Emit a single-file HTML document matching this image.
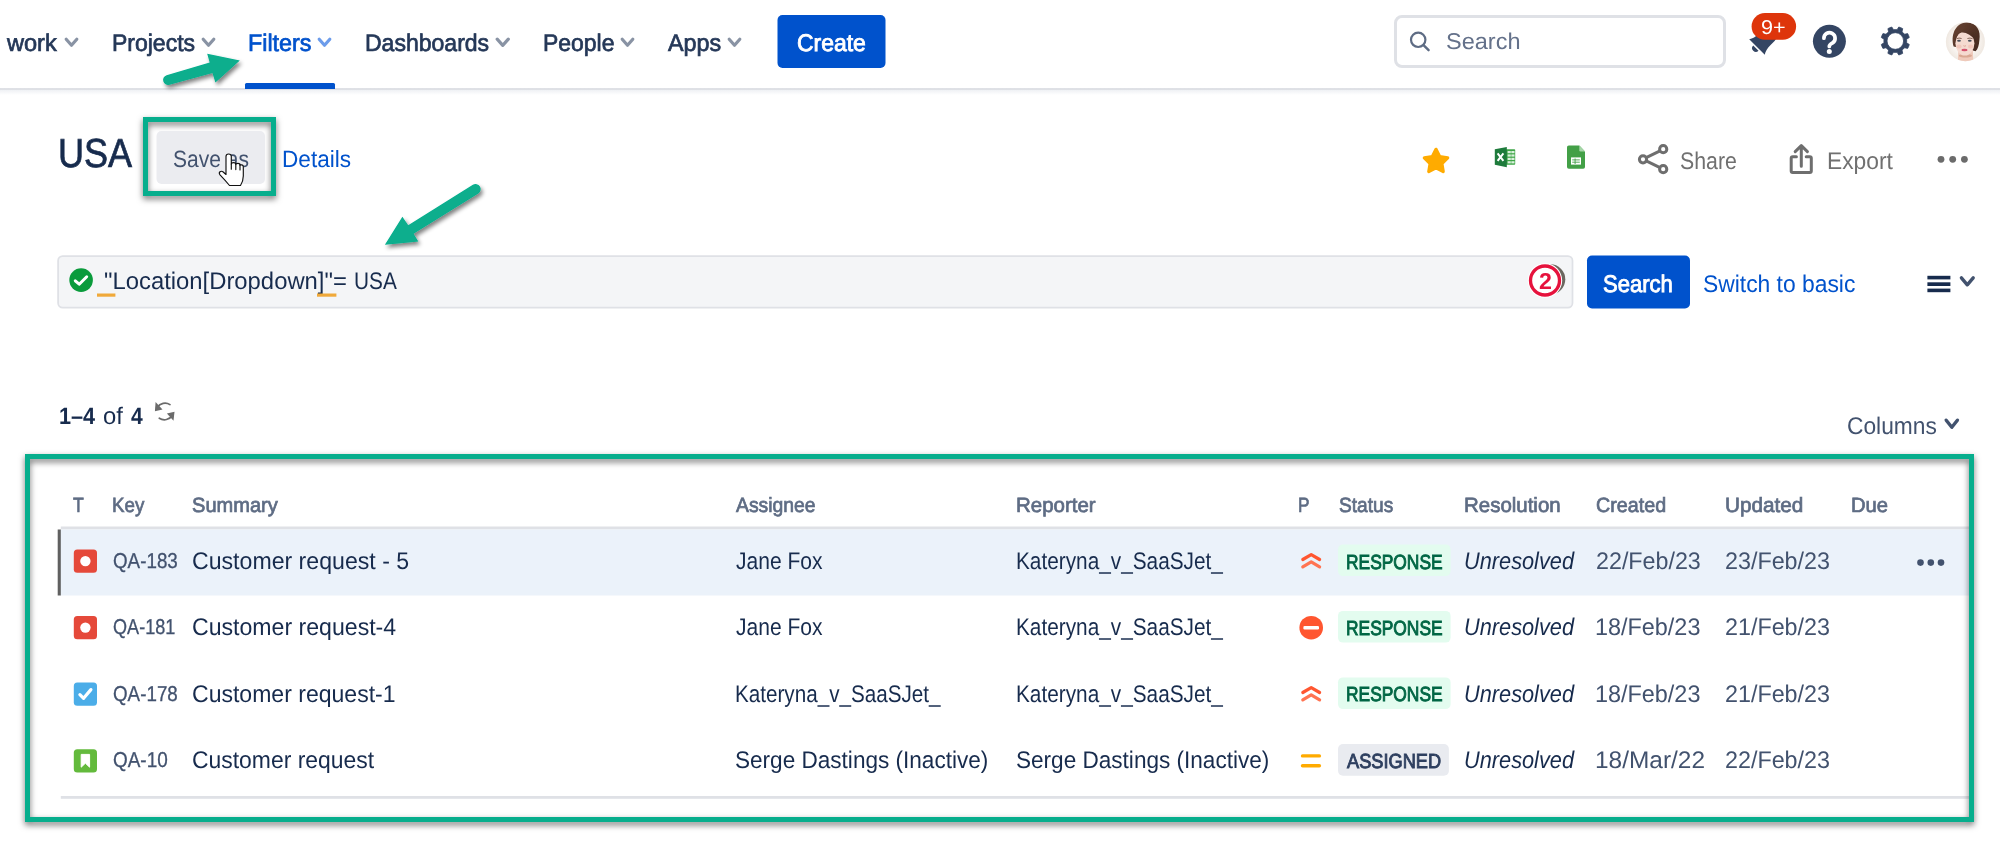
<!DOCTYPE html>
<html><head><meta charset="utf-8"><title>USA - Jira</title>
<style>
html,body{margin:0;padding:0;background:#fff;}
body{width:2000px;height:848px;position:relative;overflow:hidden;font-family:"Liberation Sans",sans-serif;text-rendering:geometricPrecision;}
.t{position:absolute;white-space:nowrap;margin:0;padding:0;transform-origin:0 0;}
.r{position:absolute;box-sizing:border-box;}
svg{position:absolute;overflow:visible;}
</style></head><body>
<div class="r" style="left:0;top:87px;width:2000px;height:8px;background:linear-gradient(to bottom,#ffffff 0%,#ffffff 8%,#DFE1E6 16%,#DEE0E5 36%,#F0F2F5 42%,#F6F7F9 65%,#ffffff 100%);"></div>
<div class="t" style="left:6.90px;top:32px;font-size:24px;line-height:24px;color:#253858;transform:scaleX(0.9811);-webkit-text-stroke:0.7px #253858;">work</div>
<svg style="left:0;top:0" width="2000" height="848"><polyline points="66.2,39.2 71.5,45.3 76.8,39.2" fill="none" stroke="#8993A4" stroke-width="3.2" stroke-linecap="round" stroke-linejoin="round"/></svg>
<div class="t" style="left:111.67px;top:32px;font-size:24px;line-height:24px;color:#253858;transform:scaleX(0.9576);-webkit-text-stroke:0.7px #253858;">Projects</div>
<svg style="left:0;top:0" width="2000" height="848"><polyline points="203.2,39.2 208.5,45.3 213.8,39.2" fill="none" stroke="#8993A4" stroke-width="3.2" stroke-linecap="round" stroke-linejoin="round"/></svg>
<div class="t" style="left:248.04px;top:32px;font-size:24px;line-height:24px;color:#0052CC;transform:scaleX(0.9713);-webkit-text-stroke:0.7px #0052CC;">Filters</div>
<svg style="left:0;top:0" width="2000" height="848"><polyline points="319.2,39.2 324.5,45.3 329.8,39.2" fill="none" stroke="#6C9CEB" stroke-width="3.2" stroke-linecap="round" stroke-linejoin="round"/></svg>
<div class="r" style="left:244.5px;top:83px;width:90.00px;height:5.50px;background:#0052CC;border-radius:0px;border-radius:1.5px 1.5px 0 0;"></div>
<div class="t" style="left:365.36px;top:32px;font-size:24px;line-height:24px;color:#253858;transform:scaleX(0.9591);-webkit-text-stroke:0.7px #253858;">Dashboards</div>
<svg style="left:0;top:0" width="2000" height="848"><polyline points="497.2,39.2 502.75,45.3 508.3,39.2" fill="none" stroke="#8993A4" stroke-width="3.2" stroke-linecap="round" stroke-linejoin="round"/></svg>
<div class="t" style="left:543.37px;top:32px;font-size:24px;line-height:24px;color:#253858;transform:scaleX(0.9552);-webkit-text-stroke:0.7px #253858;">People</div>
<svg style="left:0;top:0" width="2000" height="848"><polyline points="622.2,39.2 627.5,45.3 632.8,39.2" fill="none" stroke="#8993A4" stroke-width="3.2" stroke-linecap="round" stroke-linejoin="round"/></svg>
<div class="t" style="left:668.00px;top:32px;font-size:24px;line-height:24px;color:#253858;transform:scaleX(0.9705);-webkit-text-stroke:0.7px #253858;">Apps</div>
<svg style="left:0;top:0" width="2000" height="848"><polyline points="729.2,39.2 734.5,45.3 739.8,39.2" fill="none" stroke="#8993A4" stroke-width="3.2" stroke-linecap="round" stroke-linejoin="round"/></svg>
<svg style="left:0;top:0" width="2000" height="848"><rect x="777.5" y="15" width="108.00" height="53.00" rx="5" fill="#0052CC"/></svg>
<div class="t" style="left:797.18px;top:32px;font-size:24px;line-height:24px;color:#fff;transform:scaleX(0.9553);-webkit-text-stroke:0.85px #fff;">Create</div>
<div class="r" style="left:1393.5px;top:15px;width:332.50px;height:53.00px;background:#fff;border-radius:8px;border:3px solid #DFE1E6;"></div>
<svg style="left:0;top:0" width="2000" height="848"><circle cx="1418.2" cy="39.8" r="7.2" fill="none" stroke="#5E6C84" stroke-width="2.2"/><line x1="1423.5" y1="45.1" x2="1428.6" y2="50.2" stroke="#5E6C84" stroke-width="2.4" stroke-linecap="round"/></svg>
<div class="t" style="left:1446.04px;top:30px;font-size:22.75px;line-height:22.75px;color:#64718A;transform:scaleX(1.0332);">Search</div>
<div class="t" style="left:57.77px;top:133px;font-size:40.5px;line-height:40.5px;color:#172B4D;transform:scaleX(0.8905);-webkit-text-stroke:0.7px #172B4D;">USA</div>
<div class="r" style="left:143px;top:117px;width:133px;height:79px;border:5px solid #07AE8D;filter:drop-shadow(0.7px 3px 3.4px rgba(0,0,0,.55));"></div>
<svg style="left:0;top:0" width="2000" height="848"><rect x="156.5" y="131" width="108.50" height="53.00" rx="5" fill="#EBECF0"/></svg>
<div class="t" style="left:173.05px;top:148px;font-size:23.5px;line-height:23.5px;color:#42526E;transform:scaleX(0.8940);">Save as</div>
<div class="t" style="left:282.35px;top:148px;font-size:23.5px;line-height:23.5px;color:#0052CC;transform:scaleX(0.9614);">Details</div>
<div class="t" style="left:1680.44px;top:150px;font-size:24px;line-height:24px;color:#707070;transform:scaleX(0.8870);">Share</div>
<div class="t" style="left:1827.03px;top:150px;font-size:24px;line-height:24px;color:#707070;transform:scaleX(0.9506);">Export</div>
<svg style="left:0;top:0" width="2000" height="848"><circle cx="1941" cy="159.3" r="3.4" fill="#6B6B6B"/><circle cx="1952.7" cy="159.3" r="3.4" fill="#6B6B6B"/><circle cx="1964.4" cy="159.3" r="3.4" fill="#6B6B6B"/></svg>
<svg style="left:0;top:0" width="2000" height="848"><rect x="58.1" y="256.1" width="1514.4" height="51.6" rx="4.6" fill="#F4F5F7" stroke="#DFE1E6" stroke-width="1.75"/></svg>
<div class="t" style="left:103.50px;top:270px;font-size:24px;line-height:24px;color:#172B4D;transform:scaleX(0.9932);">&quot;Location[Dropdown]&quot;=</div>
<div class="t" style="left:353.70px;top:270px;font-size:24px;line-height:24px;color:#172B4D;transform:scaleX(0.8662);">USA</div>
<svg style="left:0;top:0" width="2000" height="848"><rect x="97" y="293.5" width="18.40" height="3.20" rx="0" fill="#F0A93A"/></svg>
<svg style="left:0;top:0" width="2000" height="848"><rect x="317" y="293.5" width="19.40" height="3.20" rx="0" fill="#F0A93A"/></svg>
<svg style="left:0;top:0" width="2000" height="848"><rect x="1587" y="255.5" width="103.00" height="53.00" rx="5" fill="#0052CC"/></svg>
<div class="t" style="left:1603.43px;top:273px;font-size:24px;line-height:24px;color:#fff;transform:scaleX(0.9187);-webkit-text-stroke:0.85px #fff;">Search</div>
<div class="t" style="left:1703.47px;top:273px;font-size:24px;line-height:24px;color:#0052CC;transform:scaleX(0.9517);">Switch to basic</div>
<svg style="left:0;top:0" width="2000" height="848"><rect x="1927.4" y="275.8" width="23.00" height="3.60" rx="0" fill="#172B4D"/></svg>
<svg style="left:0;top:0" width="2000" height="848"><rect x="1927.4" y="282.3" width="23.00" height="3.70" rx="0" fill="#172B4D"/></svg>
<svg style="left:0;top:0" width="2000" height="848"><rect x="1927.4" y="288.6" width="23.00" height="3.60" rx="0" fill="#172B4D"/></svg>
<svg style="left:0;top:0" width="2000" height="848"><polyline points="1961.4,277.8 1967.3000000000002,284.8 1973.2,277.8" fill="none" stroke="#42526E" stroke-width="3.4" stroke-linecap="round" stroke-linejoin="round"/></svg>
<div class="t" style="left:59.16px;top:406px;font-size:23.6px;line-height:23.6px;color:#172B4D;transform:scaleX(0.9184);font-weight:bold;">1–4</div>
<div class="t" style="left:103.30px;top:405px;font-size:24px;line-height:24px;color:#172B4D;transform:scaleX(0.9918);">of</div>
<div class="t" style="left:130.78px;top:406px;font-size:23.6px;line-height:23.6px;color:#172B4D;transform:scaleX(0.8933);font-weight:bold;">4</div>
<div class="t" style="left:1846.76px;top:415px;font-size:24px;line-height:24px;color:#42526E;transform:scaleX(0.9478);">Columns</div>
<svg style="left:0;top:0" width="2000" height="848"><polyline points="1946.2,420.2 1951.8,427.3 1957.3999999999999,420.2" fill="none" stroke="#42526E" stroke-width="3.4" stroke-linecap="round" stroke-linejoin="round"/></svg>
<div class="t" style="left:73.06px;top:496px;font-size:20.6px;line-height:20.6px;color:#5E6C84;transform:scaleX(0.8577);-webkit-text-stroke:0.7px #5E6C84;">T</div>
<div class="t" style="left:112.21px;top:496px;font-size:20.6px;line-height:20.6px;color:#5E6C84;transform:scaleX(0.9093);-webkit-text-stroke:0.7px #5E6C84;">Key</div>
<div class="t" style="left:192.35px;top:496px;font-size:20.6px;line-height:20.6px;color:#5E6C84;transform:scaleX(0.9741);-webkit-text-stroke:0.7px #5E6C84;">Summary</div>
<div class="t" style="left:736.21px;top:496px;font-size:20.6px;line-height:20.6px;color:#5E6C84;transform:scaleX(0.9391);-webkit-text-stroke:0.7px #5E6C84;">Assignee</div>
<div class="t" style="left:1016.07px;top:496px;font-size:20.6px;line-height:20.6px;color:#5E6C84;transform:scaleX(0.9944);-webkit-text-stroke:0.7px #5E6C84;">Reporter</div>
<div class="t" style="left:1297.83px;top:496px;font-size:20.6px;line-height:20.6px;color:#5E6C84;transform:scaleX(0.8379);-webkit-text-stroke:0.7px #5E6C84;">P</div>
<div class="t" style="left:1338.89px;top:496px;font-size:20.6px;line-height:20.6px;color:#5E6C84;transform:scaleX(0.9289);-webkit-text-stroke:0.7px #5E6C84;">Status</div>
<div class="t" style="left:1464.07px;top:496px;font-size:20.6px;line-height:20.6px;color:#5E6C84;transform:scaleX(0.9933);-webkit-text-stroke:0.7px #5E6C84;">Resolution</div>
<div class="t" style="left:1596.06px;top:496px;font-size:20.6px;line-height:20.6px;color:#5E6C84;transform:scaleX(0.9573);-webkit-text-stroke:0.7px #5E6C84;">Created</div>
<div class="t" style="left:1725.35px;top:496px;font-size:20.6px;line-height:20.6px;color:#5E6C84;transform:scaleX(1.0069);-webkit-text-stroke:0.7px #5E6C84;">Updated</div>
<div class="t" style="left:1851.29px;top:496px;font-size:20.6px;line-height:20.6px;color:#5E6C84;transform:scaleX(0.9805);-webkit-text-stroke:0.7px #5E6C84;">Due</div>
<svg style="left:0;top:0" width="2000" height="848"><rect x="60.8" y="526.5" width="1908.20" height="3.00" rx="0" fill="#DFE1E6"/></svg>
<svg style="left:0;top:0" width="2000" height="848"><rect x="60" y="529.5" width="1909.00" height="66.00" rx="0" fill="#EBF2FA"/></svg>
<svg style="left:0;top:0" width="2000" height="848"><rect x="57.7" y="529.5" width="3.10" height="66.00" rx="0" fill="#606060"/></svg>
<svg style="left:0;top:0" width="2000" height="848"><rect x="60.8" y="796" width="1908.20" height="2.80" rx="0" fill="#DFE1E6"/></svg>
<svg style="left:0;top:0" width="2000" height="848"><rect x="73.8" y="549.5" width="23.20" height="23.20" rx="3.5" fill="#E5493A"/></svg>
<svg style="left:0;top:0" width="2000" height="848"><circle cx="85.39999999999999" cy="561.1" r="5.2" fill="#fff"/></svg>
<div class="t" style="left:113.17px;top:551px;font-size:21.5px;line-height:21.5px;color:#42526E;transform:scaleX(0.8745);-webkit-text-stroke:0.3px #42526E;">QA-183</div>
<div class="t" style="left:192.34px;top:550px;font-size:24px;line-height:24px;color:#172B4D;transform:scaleX(0.9632);">Customer request - 5</div>
<div class="t" style="left:735.58px;top:550px;font-size:24px;line-height:24px;color:#172B4D;transform:scaleX(0.8755);">Jane Fox</div>
<div class="t" style="left:1015.70px;top:550px;font-size:24px;line-height:24px;color:#172B4D;transform:scaleX(0.8661);">Kateryna_v_SaaSJet_</div>
<svg style="left:0;top:0" width="2000" height="848"><g fill="none" stroke-width="3.2" stroke-linecap="round" stroke-linejoin="round"><polyline stroke="#FF5630" points="1302.8,559.5 1311.2,554.6 1319.6000000000001,559.5"/><polyline stroke="#FF7452" points="1302.8,566.9 1311.2,561.8000000000001 1319.6000000000001,566.9"/></g></svg>
<svg style="left:0;top:0" width="2000" height="848"><rect x="1338" y="544.4" width="112.60" height="31.70" rx="5" fill="#E3FCEF"/></svg>
<div class="t" style="left:1345.92px;top:553px;font-size:20.4px;line-height:20.4px;color:#006644;transform:scaleX(0.8526);-webkit-text-stroke:0.9px #006644;">RESPONSE</div>
<div class="t" style="left:1463.79px;top:550px;font-size:24px;line-height:24px;color:#172B4D;transform:scaleX(0.9063);font-style:italic;">Unresolved</div>
<div class="t" style="left:1595.74px;top:550px;font-size:24px;line-height:24px;color:#42526E;transform:scaleX(0.9694);">22/Feb/23</div>
<div class="t" style="left:1725.43px;top:550px;font-size:24px;line-height:24px;color:#42526E;transform:scaleX(0.9713);">23/Feb/23</div>
<svg style="left:0;top:0" width="2000" height="848"><rect x="73.8" y="616.0" width="23.20" height="23.20" rx="3.5" fill="#E5493A"/></svg>
<svg style="left:0;top:0" width="2000" height="848"><circle cx="85.39999999999999" cy="627.6" r="5.2" fill="#fff"/></svg>
<div class="t" style="left:113.20px;top:617px;font-size:21.5px;line-height:21.5px;color:#42526E;transform:scaleX(0.8411);-webkit-text-stroke:0.3px #42526E;">QA-181</div>
<div class="t" style="left:192.35px;top:616px;font-size:24px;line-height:24px;color:#172B4D;transform:scaleX(0.9625);">Customer request-4</div>
<div class="t" style="left:735.58px;top:616px;font-size:24px;line-height:24px;color:#172B4D;transform:scaleX(0.8755);">Jane Fox</div>
<div class="t" style="left:1015.70px;top:616px;font-size:24px;line-height:24px;color:#172B4D;transform:scaleX(0.8661);">Kateryna_v_SaaSJet_</div>
<svg style="left:0;top:0" width="2000" height="848"><circle cx="1311.2" cy="627.7" r="11.8" fill="#FF5630"/><rect x="1303.4" y="625.9" width="15.6" height="3.6" rx="1.2" fill="#fff"/></svg>
<svg style="left:0;top:0" width="2000" height="848"><rect x="1338" y="610.9" width="112.60" height="31.70" rx="5" fill="#E3FCEF"/></svg>
<div class="t" style="left:1345.92px;top:619px;font-size:20.4px;line-height:20.4px;color:#006644;transform:scaleX(0.8526);-webkit-text-stroke:0.9px #006644;">RESPONSE</div>
<div class="t" style="left:1463.79px;top:616px;font-size:24px;line-height:24px;color:#172B4D;transform:scaleX(0.9063);font-style:italic;">Unresolved</div>
<div class="t" style="left:1595.12px;top:616px;font-size:24px;line-height:24px;color:#42526E;transform:scaleX(0.9751);">18/Feb/23</div>
<div class="t" style="left:1725.43px;top:616px;font-size:24px;line-height:24px;color:#42526E;transform:scaleX(0.9713);">21/Feb/23</div>
<svg style="left:0;top:0" width="2000" height="848"><rect x="73.8" y="682.5" width="23.20" height="23.20" rx="3.5" fill="#4BADE8"/></svg>
<svg style="left:0;top:0" width="2000" height="848"><polyline points="79.89999999999999,694.6 83.6,698.3000000000001 90.89999999999999,689.6" fill="none" stroke="#fff" stroke-width="3.2" stroke-linecap="round" stroke-linejoin="round"/></svg>
<div class="t" style="left:113.17px;top:684px;font-size:21.5px;line-height:21.5px;color:#42526E;transform:scaleX(0.8745);-webkit-text-stroke:0.3px #42526E;">QA-178</div>
<div class="t" style="left:192.35px;top:683px;font-size:24px;line-height:24px;color:#172B4D;transform:scaleX(0.9598);">Customer request-1</div>
<div class="t" style="left:735.01px;top:683px;font-size:24px;line-height:24px;color:#172B4D;transform:scaleX(0.8607);">Kateryna_v_SaaSJet_</div>
<div class="t" style="left:1015.70px;top:683px;font-size:24px;line-height:24px;color:#172B4D;transform:scaleX(0.8661);">Kateryna_v_SaaSJet_</div>
<svg style="left:0;top:0" width="2000" height="848"><g fill="none" stroke-width="3.2" stroke-linecap="round" stroke-linejoin="round"><polyline stroke="#FF5630" points="1302.8,692.5 1311.2,687.6 1319.6000000000001,692.5"/><polyline stroke="#FF7452" points="1302.8,699.9 1311.2,694.8000000000001 1319.6000000000001,699.9"/></g></svg>
<svg style="left:0;top:0" width="2000" height="848"><rect x="1338" y="677.4" width="112.60" height="31.70" rx="5" fill="#E3FCEF"/></svg>
<div class="t" style="left:1345.92px;top:685px;font-size:20.4px;line-height:20.4px;color:#006644;transform:scaleX(0.8526);-webkit-text-stroke:0.9px #006644;">RESPONSE</div>
<div class="t" style="left:1463.79px;top:683px;font-size:24px;line-height:24px;color:#172B4D;transform:scaleX(0.9063);font-style:italic;">Unresolved</div>
<div class="t" style="left:1595.12px;top:683px;font-size:24px;line-height:24px;color:#42526E;transform:scaleX(0.9751);">18/Feb/23</div>
<div class="t" style="left:1725.43px;top:683px;font-size:24px;line-height:24px;color:#42526E;transform:scaleX(0.9713);">21/Feb/23</div>
<svg style="left:0;top:0" width="2000" height="848"><rect x="73.8" y="749.1999999999999" width="23.20" height="23.20" rx="3.5" fill="#63BA3C"/></svg>
<svg style="left:0;top:0" width="2000" height="848"><path d="M81.19999999999999,754.4 h8.4 v12.8 l-4.2,-4 l-4.2,4 z" fill="#fff" stroke="#fff" stroke-width="1" stroke-linejoin="round"/></svg>
<div class="t" style="left:113.16px;top:750px;font-size:21.5px;line-height:21.5px;color:#42526E;transform:scaleX(0.8805);-webkit-text-stroke:0.3px #42526E;">QA-10</div>
<div class="t" style="left:192.35px;top:749px;font-size:24px;line-height:24px;color:#172B4D;transform:scaleX(0.9547);">Customer request</div>
<div class="t" style="left:734.88px;top:749px;font-size:24px;line-height:24px;color:#172B4D;transform:scaleX(0.9401);">Serge Dastings (Inactive)</div>
<div class="t" style="left:1016.38px;top:749px;font-size:24px;line-height:24px;color:#172B4D;transform:scaleX(0.9401);">Serge Dastings (Inactive)</div>
<svg style="left:0;top:0" width="2000" height="848"><g stroke="#FFAB00" stroke-width="3.4" stroke-linecap="round"><line x1="1302.5" y1="755.9" x2="1319.4" y2="755.9"/><line x1="1302.5" y1="765.8" x2="1319.4" y2="765.8"/></g></svg>
<svg style="left:0;top:0" width="2000" height="848"><rect x="1338" y="744.0999999999999" width="110.90" height="31.70" rx="5" fill="#E9EBF0"/></svg>
<div class="t" style="left:1346.91px;top:752px;font-size:20.4px;line-height:20.4px;color:#2E3F5F;transform:scaleX(0.8925);-webkit-text-stroke:0.9px #2E3F5F;">ASSIGNED</div>
<div class="t" style="left:1463.79px;top:749px;font-size:24px;line-height:24px;color:#172B4D;transform:scaleX(0.9063);font-style:italic;">Unresolved</div>
<div class="t" style="left:1595.04px;top:749px;font-size:24px;line-height:24px;color:#42526E;transform:scaleX(1.0179);">18/Mar/22</div>
<div class="t" style="left:1725.43px;top:749px;font-size:24px;line-height:24px;color:#42526E;transform:scaleX(0.9713);">22/Feb/23</div>
<svg style="left:0;top:0" width="2000" height="848"><circle cx="1920.5" cy="562.6" r="3.3" fill="#42526E"/><circle cx="1930.8" cy="562.6" r="3.3" fill="#42526E"/><circle cx="1941" cy="562.6" r="3.3" fill="#42526E"/></svg>
<div class="r" style="left:25px;top:454px;width:1949px;height:368px;border:5px solid #07AE8D;filter:drop-shadow(0.7px 3px 3.4px rgba(0,0,0,.55));"></div>
<svg style="left:0;top:0" width="2000" height="848"><defs><filter id="ash" x="-20%" y="-20%" width="150%" height="150%"><feGaussianBlur in="SourceAlpha" stdDeviation="1.9"/><feOffset dx="2" dy="2.6"/><feComponentTransfer><feFuncA type="linear" slope="0.5"/></feComponentTransfer><feMerge><feMergeNode/><feMergeNode in="SourceGraphic"/></feMerge></filter></defs><g filter="url(#ash)" fill="#07AE8D" stroke="none"><path d="M166.64,75.19 L209.7,62.6 L207.2,53.8 L239.8,60.5 L215.4,82.5 L212.5,72.9 L169.4,84.8 A5,5 0 0 1 166.64,75.19 Z"/><path d="M472.9,184.8 L408.2,225.2 L402.4,216.7 L384.9,244.8 L418.3,241.6 L413.5,233.7 L478.3,193.4 A5.05,5.05 0 0 0 472.9,184.8 Z"/></g></svg>
<svg style="left:0;top:0" width="2000" height="848"><g stroke="#111" stroke-width="1.15" stroke-linejoin="round" stroke-linecap="round"><path fill="#fff" d="M226,156.5 Q226,154 228.6,154 Q231.3,154 231.3,156.5 L231.3,164 Q231.3,162.6 233.5,162.6 Q235.8,162.6 235.8,164.5 Q235.8,163.4 237.9,163.4 Q240,163.4 240,165.3 Q240,164.8 241.7,164.8 Q243.3,164.8 243.3,167 L243.3,176 Q243.3,181 240.5,185.5 L229.5,185.5 Q226,181 220,174.8 Q218.6,173 220,171.8 Q221.5,170.6 223.2,172 L226,174.5 Z"/><path fill="none" d="M231.3,164 V169.2 M235.8,164.5 V169.6 M240,165.3 V170"/></g></svg>
<svg style="left:0;top:0" width="2000" height="848"><polygon points="1436.00,149.30 1439.64,156.58 1447.70,157.80 1441.90,163.52 1443.23,171.55 1436.00,167.80 1428.77,171.55 1430.10,163.52 1424.30,157.80 1432.36,156.58" fill="#FFAB00" stroke="#FFAB00" stroke-width="3.2" stroke-linejoin="round"/></svg>
<svg style="left:0;top:0" width="2000" height="848"><rect x="1505" y="149.2" width="10.2" height="15.5" rx="0.8" fill="#3FA648"/><g fill="#d9f0dc"><rect x="1507.6" y="151" width="3.2" height="2.2"/><rect x="1507.6" y="154.4" width="3.2" height="2.2"/><rect x="1507.6" y="157.8" width="3.2" height="2.2"/><rect x="1507.6" y="161.2" width="3.2" height="2.2"/><rect x="1511.3" y="151" width="3.2" height="2.2"/><rect x="1511.3" y="154.4" width="3.2" height="2.2"/><rect x="1511.3" y="157.8" width="3.2" height="2.2"/><rect x="1511.3" y="161.2" width="3.2" height="2.2"/></g><polygon points="1494.8,149.3 1506.8,147 1506.8,167.2 1494.8,164.8" fill="#1E7B3C"/><path d="M1497.6,153.4 L1503.4,160.9 M1503.4,153.4 L1497.6,160.9" stroke="#fff" stroke-width="2" fill="none"/></svg>
<svg style="left:0;top:0" width="2000" height="848"><path d="M1568.8,145.5 H1579.3 L1585,151.6 V166.9 Q1585,168.7 1583.2,168.7 H1568.8 Q1567,168.7 1567,166.9 V147.3 Q1567,145.5 1568.8,145.5 Z" fill="#43A047"/><path d="M1579.3,145.5 L1585,151.6 H1580.6 Q1579.3,151.6 1579.3,150.3 Z" fill="#A5D6A7"/><rect x="1571" y="157.4" width="10" height="7.2" fill="#fff"/><path d="M1572.2,159.9 H1579.8 M1572.2,162.2 H1579.8 M1575.1,158.5 V164" stroke="#43A047" stroke-width="0.9"/></svg>
<svg style="left:0;top:0" width="2000" height="848"><g fill="none" stroke="#6E6E6E" stroke-width="3"><path d="M1646.2,157.7 L1660,150.8 M1646.2,160.9 L1660,167.6"/><circle cx="1663.2" cy="149.2" r="3.6" fill="#fff"/><circle cx="1643" cy="159.3" r="3.6" fill="#fff"/><circle cx="1663.2" cy="169.2" r="3.6" fill="#fff"/></g></svg>
<svg style="left:0;top:0" width="2000" height="848"><g fill="none" stroke="#6E6E6E" stroke-width="3" stroke-linecap="round" stroke-linejoin="round"><path d="M1796.4,156.8 H1792.7 Q1791.2,156.8 1791.2,158.3 V171 Q1791.2,172.5 1792.7,172.5 H1809.8 Q1811.3,172.5 1811.3,171 V158.3 Q1811.3,156.8 1809.8,156.8 H1806.2"/><path d="M1801.3,166.3 V146.2 M1795.2,151.6 L1801.3,145.6 L1807.4,151.6"/></g></svg>
<svg style="left:0;top:0" width="2000" height="848"><g transform="translate(1757,47) rotate(45)" fill="#344563"><path d="M-11,0 L11,0 C9,-3 8.2,-6 8.2,-11 L8.2,-17 C8.2,-21 4,-24 0,-24 C-4,-24 -8.2,-21 -8.2,-17 L-8.2,-11 C-8.2,-6 -9,-3 -11,0 Z"/><path d="M-3.7,1.6 A3.7,3.7 0 0 0 3.7,1.6 Z"/></g></svg>
<svg style="left:0;top:0" width="2000" height="848"><rect x="1751.6" y="13.1" width="44.50" height="26.60" rx="13.3" fill="#DE350B"/></svg>
<div class="t" style="left:1760.61px;top:18px;font-size:20px;line-height:20px;color:#fff;transform:scaleX(1.0813);">9+</div>
<svg style="left:0;top:0" width="2000" height="848"><circle cx="1829.4" cy="41.3" r="16.5" fill="#344563"/><path d="M1823.9,38.2 A5.6,5.6 0 1 1 1832.6,42.9 Q1829.3,44.7 1829.3,46.4" fill="none" stroke="#fff" stroke-width="3.7" stroke-linecap="round"/><circle cx="1829.3" cy="51.4" r="2.5" fill="#fff"/></svg>
<svg style="left:0;top:0" width="2000" height="848"><path d="M1906.56,42.78 L1909.27,44.48 A14.4,14.4 0 0 1 1907.64,48.42 L1904.52,47.70 A11.4,11.4 0 0 1 1902.00,50.22 L1902.72,53.34 A14.4,14.4 0 0 1 1898.78,54.97 L1897.08,52.26 A11.4,11.4 0 0 1 1893.52,52.26 L1891.82,54.97 A14.4,14.4 0 0 1 1887.88,53.34 L1888.60,50.22 A11.4,11.4 0 0 1 1886.08,47.70 L1882.96,48.42 A14.4,14.4 0 0 1 1881.33,44.48 L1884.04,42.78 A11.4,11.4 0 0 1 1884.04,39.22 L1881.33,37.52 A14.4,14.4 0 0 1 1882.96,33.58 L1886.08,34.30 A11.4,11.4 0 0 1 1888.60,31.78 L1887.88,28.66 A14.4,14.4 0 0 1 1891.82,27.03 L1893.52,29.74 A11.4,11.4 0 0 1 1897.08,29.74 L1898.78,27.03 A14.4,14.4 0 0 1 1902.72,28.66 L1902.00,31.78 A11.4,11.4 0 0 1 1904.52,34.30 L1907.64,33.58 A14.4,14.4 0 0 1 1909.27,37.52 L1906.56,39.22 A11.4,11.4 0 0 1 1906.56,42.78 Z M1903.6,41 A8.3,8.3 0 1 0 1887.0,41 A8.3,8.3 0 1 0 1903.6,41 Z" fill="#344563" fill-rule="evenodd" stroke="#344563" stroke-width="0.8" stroke-linejoin="round"/></svg>
<svg style="left:0;top:0" width="2000" height="848"><defs><clipPath id="avc"><circle cx="1965.4" cy="41.8" r="19.5"/></clipPath><filter id="avb" x="-20%" y="-20%" width="140%" height="140%"><feGaussianBlur stdDeviation="0.6"/></filter><radialGradient id="avg" cx="50%" cy="50%" r="50%"><stop offset="0.55" stop-color="#FBF8F5"/><stop offset="1" stop-color="#EFE8E1"/></radialGradient><linearGradient id="avh" x1="0" y1="0" x2="1" y2="1"><stop offset="0" stop-color="#6A4534"/><stop offset="0.6" stop-color="#4F3024"/><stop offset="1" stop-color="#432A20"/></linearGradient></defs><circle cx="1965.4" cy="41.8" r="19.5" fill="url(#avg)"/><g clip-path="url(#avc)"><g filter="url(#avb)"><path d="M1953.6,46.5 C1950.6,36 1954.5,23.3 1966.5,22.5 C1976.8,22.2 1981,31 1979.4,40 C1979,45.5 1977.8,49.5 1975.6,51.2 L1971,50 L1958,47.5 Z" fill="url(#avh)"/><path d="M1958.4,50 L1972.8,50 L1973.3,62.5 L1957.8,62.5 Z" fill="#EFCABB"/><ellipse cx="1965.4" cy="55.8" rx="6.6" ry="1.8" fill="#D9A893"/><ellipse cx="1964.9" cy="43.3" rx="9.5" ry="12.3" fill="#F5DAD0"/><ellipse cx="1959" cy="46.5" rx="2.6" ry="1.9" fill="#EFC0B6" opacity=".75"/><ellipse cx="1970.6" cy="46.5" rx="2.6" ry="1.9" fill="#EFC0B6" opacity=".75"/><path d="M1954.4,43 C1953.8,33 1958.5,27 1964,26.8 C1971.5,26.7 1976,33 1976.4,43 C1974.4,38.3 1970.8,34.6 1965.8,32.9 C1962.6,31.9 1959.9,32.4 1958.4,34.2 C1956.6,36.4 1955.5,39.8 1954.4,43 Z" fill="url(#avh)"/><path d="M1956.6,38.7 Q1959,37.5 1961.6,38.5 M1967.4,38.5 Q1970,37.5 1972.6,38.7" stroke="#7a5a4c" stroke-width="0.9" fill="none"/><ellipse cx="1959" cy="40.7" rx="1.9" ry="1.05" fill="#474d59"/><ellipse cx="1969.8" cy="40.7" rx="1.9" ry="1.05" fill="#474d59"/><path d="M1963.4,45.7 Q1964.6,46.7 1966,45.7" stroke="#DDA898" stroke-width="1" fill="none"/><ellipse cx="1964.5" cy="50" rx="3.1" ry="1.25" fill="#D6526E"/></g></g></svg>
<svg style="left:0;top:0" width="2000" height="848"><circle cx="81.1" cy="280.1" r="11.8" fill="#0A9B3C"/><polyline points="75.3,280.8 79.2,284.2 86.7,276.8" fill="none" stroke="#fff" stroke-width="3" stroke-linecap="round" stroke-linejoin="round"/></svg>
<svg style="left:0;top:0" width="2000" height="848"><circle cx="1550.3" cy="279.3" r="15" fill="#6b675f"/><circle cx="1545" cy="280.5" r="17.2" fill="#fff"/><circle cx="1545" cy="280.5" r="14.5" fill="#fff" stroke="#E6123D" stroke-width="3.3"/></svg>
<div class="t" style="left:1538.61px;top:270px;font-size:23px;line-height:23px;color:#E6123D;transform:scaleX(1.0082);font-weight:bold;">2</div>
<svg style="left:0;top:0" width="2000" height="848"><g fill="none" stroke="#6B6B6B" stroke-width="1.7" stroke-linecap="round"><path d="M170,404.6 A9.3,9.3 0 0 0 157.3,407.3"/><path d="M159.3,418.2 A9.3,9.3 0 0 0 172.4,415.3"/></g><g fill="#6B6B6B"><polygon points="155.6,402.1 154.9,411.2 162.5,409.5"/><polygon points="174.5,411.8 166.9,413.5 173.5,420.8"/></g></svg>
</body></html>
